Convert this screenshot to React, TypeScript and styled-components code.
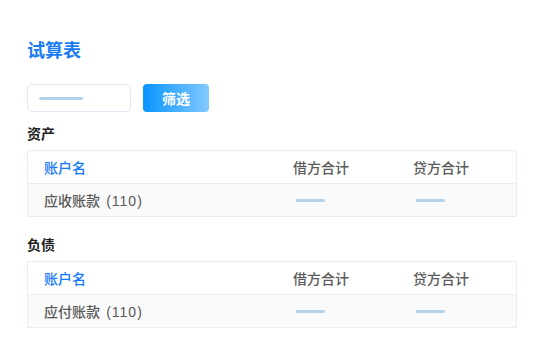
import React from 'react';
import styled, { createGlobalStyle } from 'styled-components';

const GlobalStyle = createGlobalStyle`
  body {
    margin: 0;
    background: #ffffff;
    font-family: "Noto Sans CJK SC", "Noto Sans", "Liberation Sans", sans-serif;
  }
`;

type Row = { name: string; code: string };

const sections: { title: string; rows: Row[] }[] = [
  { title: '资产', rows: [{ name: '应收账款', code: '(110)' }] },
  { title: '负债', rows: [{ name: '应付账款', code: '(110)' }] },
];

const App = () => {
  return (
    <Page>
      <GlobalStyle />
      <Title>试算表</Title>
      <FilterBar>
        <SearchBox>
          <Placeholder />
        </SearchBox>
        <FilterButton>筛选</FilterButton>
      </FilterBar>
      {sections.map((section, i) => (
        <Section key={section.title} $first={i === 0}>
          <SectionTitle>{section.title}</SectionTitle>
          <Table>
            <HeaderRow>
              <NameHead>账户名</NameHead>
              <Head>借方合计</Head>
              <Head>贷方合计</Head>
            </HeaderRow>
            {section.rows.map((row) => (
              <BodyRow key={row.name}>
                <Cell>
                  {row.name} <Code>{row.code}</Code>
                </Cell>
                <Cell>
                  <Bar />
                </Cell>
                <Cell>
                  <Bar />
                </Cell>
              </BodyRow>
            ))}
          </Table>
        </Section>
      ))}
    </Page>
  );
};

const Page = styled.div`
  width: 545px;
  padding: 36px 28px 0 27px;
  box-sizing: border-box;
`;

const Title = styled.h1`
  margin: 0;
  font-size: 18px;
  line-height: 26px;
  font-weight: 600;
  color: #1a7cf5;
`;

const FilterBar = styled.div`
  display: flex;
  align-items: center;
  gap: 12px;
  margin-top: 22px;
`;

const SearchBox = styled.div`
  width: 104px;
  height: 28px;
  box-sizing: border-box;
  border: 1px solid #dfeaf9;
  border-radius: 5px;
  display: flex;
  align-items: center;
  padding-left: 11px;
`;

const Placeholder = styled.div`
  width: 44px;
  height: 3px;
  border-radius: 2px;
  background: #b6d2e8;
`;

const FilterButton = styled.button`
  width: 66px;
  height: 28px;
  border: none;
  border-radius: 4px;
  background: linear-gradient(90deg, #0895ff 0%, #82c9ff 100%);
  color: #ffffff;
  font-family: inherit;
  font-size: 14px;
  font-weight: 600;
  padding: 0;
  cursor: pointer;
`;

const Section = styled.section<{ $first: boolean }>`
  margin-top: ${(p) => (p.$first ? '11px' : '17px')};
`;

const SectionTitle = styled.div`
  font-size: 14px;
  line-height: 20px;
  font-weight: 600;
  color: #1f1f1f;
  margin-bottom: 7px;
`;

const Table = styled.div`
  border: 1px solid #e6eef9;
`;

const HeaderRow = styled.div`
  display: grid;
  grid-template-columns: 249px 120px 1fr;
  align-items: center;
  height: 32px;
  padding-left: 16px;
  border-bottom: 1px solid #e6eef9;
  background: #ffffff;
`;

const BodyRow = styled(HeaderRow)`
  border-bottom: none;
  background: #fafafa;
`;

const Head = styled.div`
  font-size: 14px;
  color: #5a5a5a;
  font-weight: 500;
`;

const NameHead = styled(Head)`
  color: #1677ff;
`;

const Cell = styled.div`
  font-size: 14px;
  color: #595959;
  font-weight: 500;
  white-space: nowrap;
`;

const Code = styled.span`
  font-family: "Liberation Sans", "Noto Sans CJK SC", sans-serif;
  font-weight: 400;
  letter-spacing: 1px;
  margin-left: 3px;
`;

const Bar = styled.div`
  width: 29px;
  height: 3px;
  margin-left: 3px;
  border-radius: 2px;
  background: #b3d3ea;
`;

export default App;
